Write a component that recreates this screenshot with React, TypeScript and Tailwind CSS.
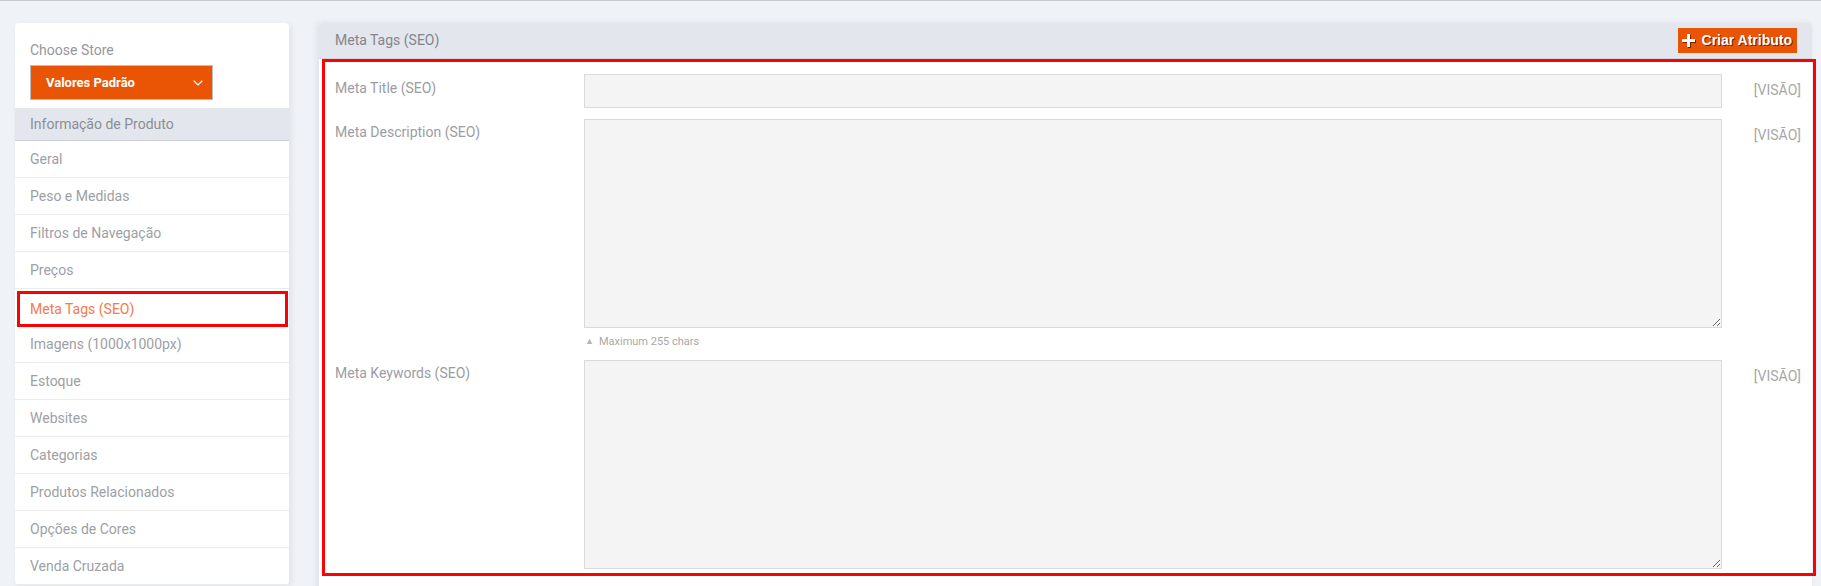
import React from "react";
import { ChevronDown } from "lucide-react";

const items = [
  "Geral",
  "Peso e Medidas",
  "Filtros de Navegação",
  "Preços",
  "Meta Tags (SEO)",
  "Imagens (1000x1000px)",
  "Estoque",
  "Websites",
  "Categorias",
  "Produtos Relacionados",
  "Opções de Cores",
  "Venda Cruzada",
];

function Sidebar() {
  return (
    <div className="w-[274px] shrink-0 bg-white rounded-[4px] shadow-[2px_2px_6px_rgba(30,40,60,0.08)]">
      <div className="px-[15px] pt-[17px] pb-[8px]">
        <div className="text-[14px] leading-[20px] text-[#95979c] mb-[5px]">Choose Store</div>
        <div className="w-[183px] h-[35px] bg-[#ea5405] border border-[#bdbdbd] flex items-center justify-between pl-[15px] pr-[6px]">
          <span className="text-white font-bold text-[13px]">Valores Padrão</span>
          <ChevronDown size={16} strokeWidth={1.6} className="text-white" />
        </div>
      </div>
      <div className="h-[33px] bg-[#e3e6ed] border-b border-[#cdd1d8] flex items-center px-[15px] text-[14px] text-[#8b8e95]">
        Informação de Produto
      </div>
      {items.map((it) =>
        it === "Meta Tags (SEO)" ? (
          <div key={it} className="h-[37px] border-b border-[#ececec] pt-[2px] pl-[2px] pr-[1px]">
            <div className="h-[36px] border-[3px] border-[#ff0000] flex items-center pl-[10px] text-[14px] text-[#f47a4c] relative">
              {it}
            </div>
          </div>
        ) : (
          <div key={it} className="h-[37px] border-b border-[#ececec] flex items-center px-[15px] text-[14px] text-[#9da0a5]">
            {it}
          </div>
        )
      )}
    </div>
  );
}

function Visao() {
  return <div className="w-[79px] shrink-0 text-right text-[14px] leading-[20px] text-[#a9a7a4]">[VISÃO]</div>;
}

function Main() {
  return (
    <div className="flex-1 min-w-0 bg-white rounded-t-[4px] shadow-[-2px_0_6px_rgba(30,40,60,0.08)] pb-[20px]">
      <div className="h-[36px] bg-[#e3e6ed] border-b border-[#d3d6dc] rounded-t-[4px] flex items-center justify-between pl-[16px] pr-[15px]">
        <span className="text-[14px] text-[#82858c]">Meta Tags (SEO)</span>
        <button className="h-[25px] bg-[#ea5405] flex items-center gap-[7px] pl-[4px] pr-[5px] text-white font-bold text-[14px] font-['Liberation_Sans',Arial,sans-serif] [text-shadow:1px_1px_0_rgba(90,20,0,0.8)]">
          <svg width="13" height="13" viewBox="0 0 13 13" className="drop-shadow-[1px_1px_0_rgba(90,20,0,0.8)]">
            <rect x="5" y="0" width="3" height="13" fill="white" />
            <rect x="0" y="5" width="13" height="3" fill="white" />
          </svg>
          Criar Atributo
        </button>
      </div>
      <div className="ml-[3px] mr-[-4px] border-[3px] border-[#ff0000] pt-[12px] pl-[10px] pr-[12px] pb-[4px]">
        <div className="flex items-start">
          <div className="w-[249px] shrink-0 pt-[4px] text-[14px] leading-[20px] text-[#9a9da2]">Meta Title (SEO)</div>
          <div className="w-[1138px] h-[34px] bg-[#f4f4f4] border border-[#d9d9d9]" />
          <div className="pt-[6px]"><Visao /></div>
        </div>
        <div className="flex items-start mt-[11px]">
          <div className="w-[249px] shrink-0 pt-[3px] text-[14px] leading-[20px] text-[#9a9da2]">Meta Description (SEO)</div>
          <div className="w-[1138px] shrink-0">
            <textarea className="block w-[1138px] h-[209px] bg-[#f4f4f4] border border-[#d9d9d9] outline-none" />
            <div className="mt-[4px] h-[20px] flex items-center gap-[5px] pl-[1px] text-[11px] text-[#a8a8a8]">
              <span className="text-[9px] text-[#b0b3b8]">▲</span>
              <span>Maximum 255 chars</span>
            </div>
          </div>
          <div className="pt-[6px]"><Visao /></div>
        </div>
        <div className="flex items-start mt-[8px]">
          <div className="w-[249px] shrink-0 pt-[3px] text-[14px] leading-[20px] text-[#9a9da2]">Meta Keywords (SEO)</div>
          <textarea className="block w-[1138px] h-[209px] shrink-0 bg-[#f4f4f4] border border-[#d9d9d9] outline-none" />
          <div className="pt-[6px]"><Visao /></div>
        </div>
      </div>
    </div>
  );
}

export default function App() {
  return (
    <div className="h-[586px] overflow-hidden bg-[#eff2f7] border-t border-[#c6c9ce] font-['Roboto',sans-serif]">
      <div className="flex items-start pt-[22px] pl-[15px] pr-[9px] gap-[30px]">
        <Sidebar />
        <Main />
      </div>
    </div>
  );
}
